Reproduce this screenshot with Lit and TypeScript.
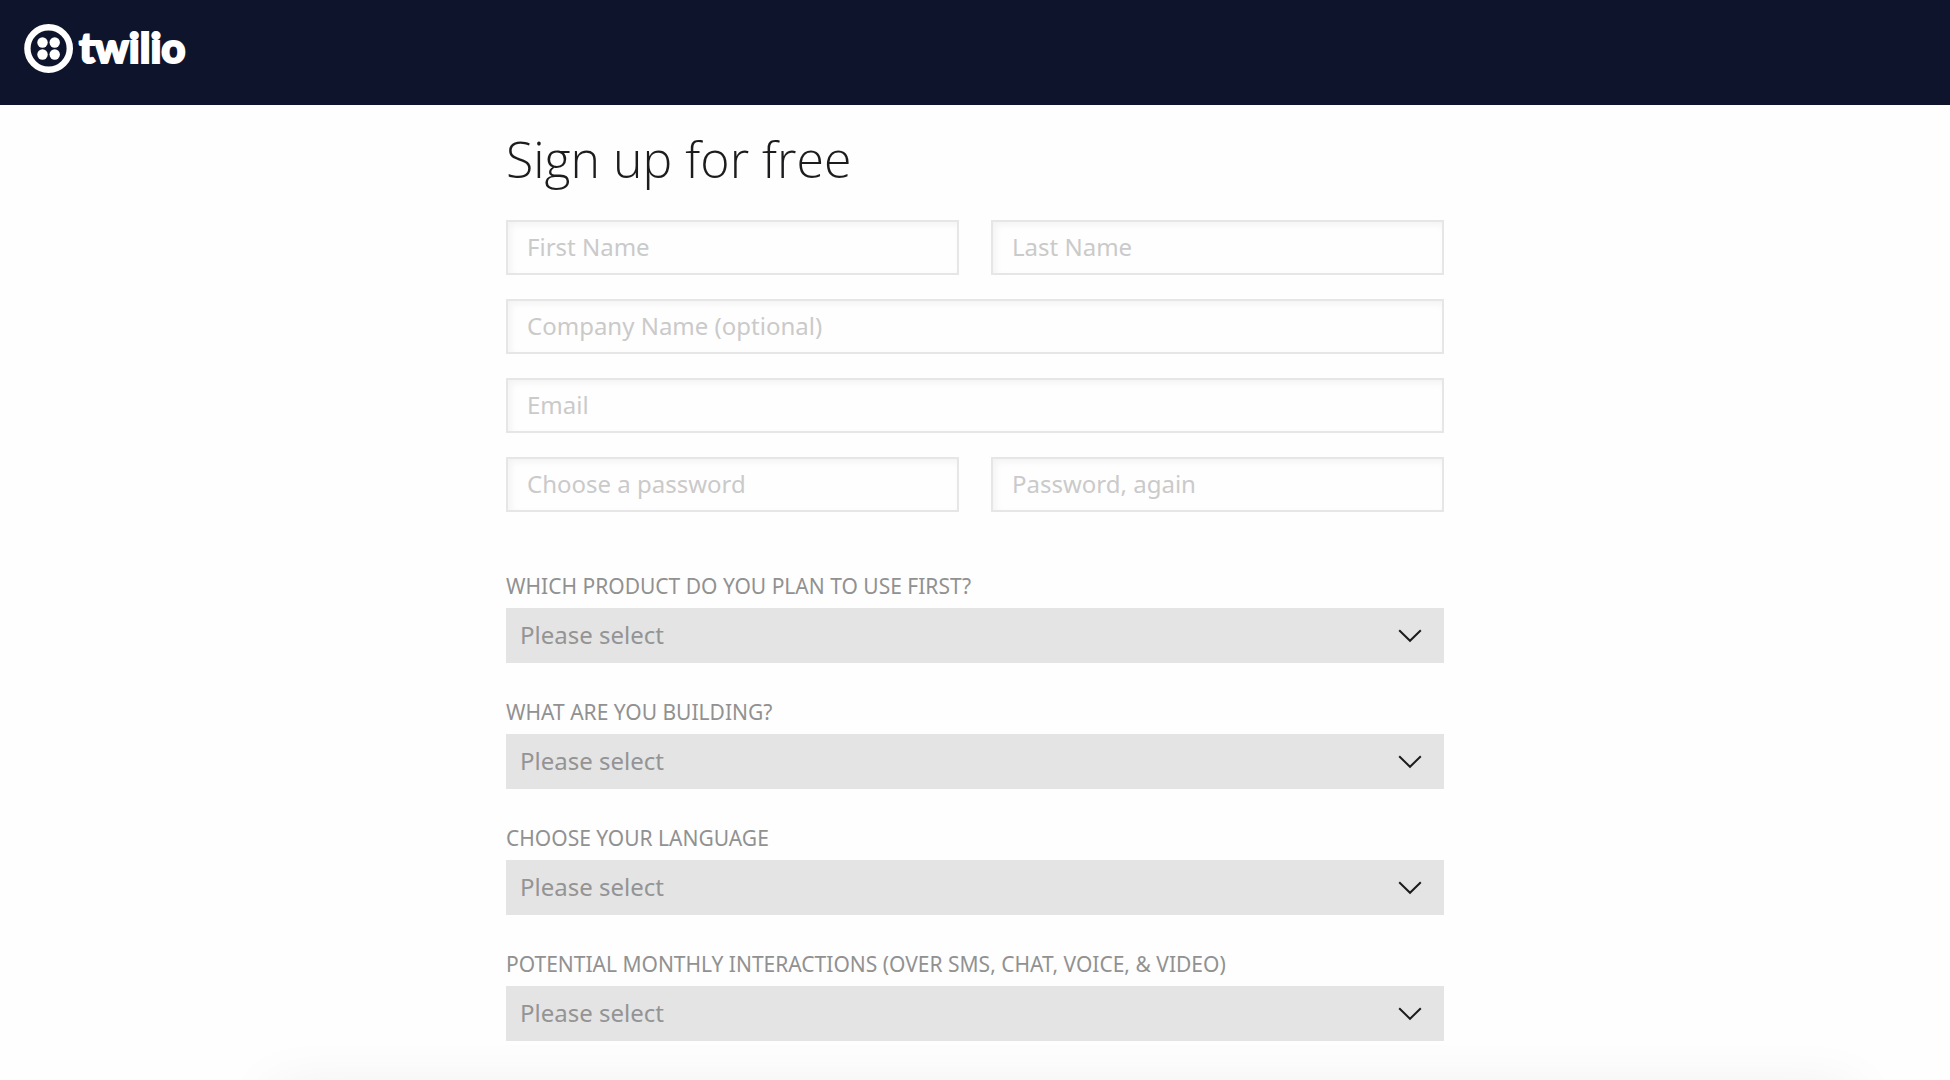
import { LitElement, html, css, svg } from "lit";
import { customElement, property } from "lit/decorators.js";

@customElement("site-header")
class SiteHeader extends LitElement {
  static styles = css`
    :host {
      display: block;
    }
    .bar {
      display: flex;
      align-items: flex-start;
      box-sizing: border-box;
      height: 105px;
      padding: 24px;
      background: #0f142d;
    }
    .brand {
      display: flex;
      align-items: center;
      gap: 6px;
      height: 49px;
      color: #fff;
      text-decoration: none;
    }
    .mark {
      display: block;
      width: 49px;
      height: 49px;
      fill: currentColor;
    }
    .word {
      padding-bottom: 4px;
      font: 900 42px/48px Lato, "Liberation Sans", sans-serif;
      -webkit-text-stroke: 2px #fff;
    }
  `;

  render() {
    const dots = [
      [18.5, 18.5],
      [30.7, 18.5],
      [18.5, 30.5],
      [30.7, 30.5],
    ];
    return html`
      <header class="bar">
        <a class="brand" href="/">
          <svg class="mark" viewBox="0 0 49 49" aria-hidden="true">
            <circle cx="24.6" cy="24.5" r="21.2" fill="none" stroke="currentColor" stroke-width="6.4" />
            ${dots.map(([x, y]) => svg`<circle cx=${x} cy=${y} r="5.2" />`)}
          </svg>
          <span class="word">twilio</span>
        </a>
      </header>
    `;
  }
}

@customElement("select-field")
class SelectField extends LitElement {
  @property() label = "";
  @property({ attribute: false }) options: string[] = [];

  static styles = css`
    :host {
      display: block;
    }
    .label {
      display: block;
      padding-bottom: 8px;
      font-size: 21px;
      line-height: 28px;
      text-transform: uppercase;
      color: #919191;
    }
    .box {
      display: grid;
      align-items: center;
    }
    .select {
      grid-area: 1 / 1;
      appearance: none;
      box-sizing: border-box;
      width: 100%;
      height: 55px;
      margin: 0;
      padding: 0 60px 2px 14px;
      border: 0;
      border-radius: 0;
      background: #e4e4e4;
      font: inherit;
      font-size: 24px;
      color: #949494;
    }
    .arrow {
      grid-area: 1 / 1;
      justify-self: end;
      width: 24px;
      height: 14px;
      margin-right: 22px;
      pointer-events: none;
      fill: none;
      stroke: #1c1c1e;
      stroke-width: 2;
    }
  `;

  render() {
    return html`
      <label class="label" for="choice">${this.label}</label>
      <div class="box">
        <select class="select" id="choice">
          <option value="">Please select</option>
          ${this.options.map((o) => html`<option>${o}</option>`)}
        </select>
        <svg class="arrow" viewBox="0 0 24 14" aria-hidden="true">
          <path d="M1.2 1.2 12 11.8 22.8 1.2" />
        </svg>
      </div>
    `;
  }
}

interface TextField {
  name: string;
  text: string;
  type: string;
  wide?: boolean;
}

@customElement("app-root")
class AppRoot extends LitElement {
  static styles = css`
    :host {
      display: block;
      position: relative;
      overflow: hidden;
      min-height: 100vh;
      background: #fefefe;
      font-family: "Noto Sans", "Open Sans", "Liberation Sans", sans-serif;
    }
    .main {
      box-sizing: border-box;
      max-width: 986px;
      margin: 0 auto;
      padding: 22px 24px 39px;
    }
    .title {
      margin: 0 0 29px;
      font-family: "Open Sans", "Noto Sans", sans-serif;
      font-size: 50px;
      font-weight: 300;
      line-height: 64px;
      color: #1c1c1e;
    }
    .fields {
      display: grid;
      grid-template-columns: 1fr 1fr;
      gap: 24px 32px;
    }
    .input {
      box-sizing: border-box;
      width: 100%;
      height: 55px;
      margin: 0;
      padding: 0 19px 2px;
      border: 2px solid #e6e6e6;
      border-radius: 0;
      background: #fefefe;
      box-shadow: inset 3px 3px 6px #f3f3f3;
      font: inherit;
      font-size: 24px;
      color: #1c1c1e;
    }
    .input::placeholder {
      color: #cacaca;
      opacity: 1;
    }
    .wide {
      grid-column: 1 / -1;
    }
    .questions {
      display: grid;
      gap: 35px;
      margin-top: 60px;
    }
    .shade {
      position: absolute;
      left: 14%;
      right: 5%;
      bottom: -48px;
      height: 30px;
      box-shadow: 0 0 60px #e2e2e2;
      pointer-events: none;
    }
  `;

  private fields: TextField[] = [
    { name: "first", text: "First Name", type: "text" },
    { name: "last", text: "Last Name", type: "text" },
    { name: "company", text: "Company Name (optional)", type: "text", wide: true },
    { name: "email", text: "Email", type: "email", wide: true },
    { name: "password", text: "Choose a password", type: "password" },
    { name: "confirm", text: "Password, again", type: "password" },
  ];

  private questions = [
    "Which product do you plan to use first?",
    "What are you building?",
    "Choose your language",
    "Potential monthly interactions (over SMS, chat, voice, & video)",
  ];

  render() {
    return html`
      <site-header></site-header>
      <main class="main">
        <h1 class="title">Sign up for free</h1>
        <form>
          <div class="fields">
            ${this.fields.map(
              (f) => html`<input
                class="input ${f.wide ? "wide" : ""}"
                type=${f.type}
                name=${f.name}
                placeholder=${f.text}
                aria-label=${f.text}
              />`
            )}
          </div>
          <div class="questions">
            ${this.questions.map((q) => html`<select-field .label=${q}></select-field>`)}
          </div>
        </form>
      </main>
      <div class="shade"></div>
    `;
  }
}
